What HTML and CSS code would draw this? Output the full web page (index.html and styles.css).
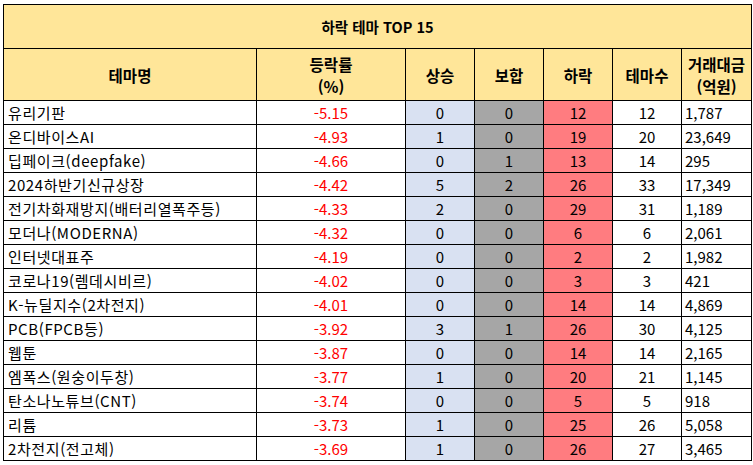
FILE: index.html
```html
<!DOCTYPE html>
<html lang="ko">
<head>
<meta charset="utf-8">
<title>하락 테마 TOP 15</title>
<link rel="stylesheet" href="styles.css">
</head>
<body>
<table class="grid">
  <colgroup>
    <col class="c-name"><col class="c-rate"><col class="c-n"><col class="c-n"><col class="c-n"><col class="c-n"><col class="c-amt">
  </colgroup>
  <thead>
    <tr class="title-row"><th colspan="7">하락 테마 TOP 15</th></tr>
    <tr class="head-row">
      <th>테마명</th><th>등락률<br>(%)</th><th>상승</th><th>보합</th><th>하락</th><th>테마수</th><th>거래대금<br>(억원)</th>
    </tr>
  </thead>
  <tbody>
    <tr><td class="name">유리기판</td><td class="rate">-5.15</td><td class="up">0</td><td class="flat">0</td><td class="down">12</td><td class="cnt">12</td><td class="amt">1,787</td></tr>
    <tr><td class="name">온디바이스AI</td><td class="rate">-4.93</td><td class="up">1</td><td class="flat">0</td><td class="down">19</td><td class="cnt">20</td><td class="amt">23,649</td></tr>
    <tr><td class="name">딥페이크(deepfake)</td><td class="rate">-4.66</td><td class="up">0</td><td class="flat">1</td><td class="down">13</td><td class="cnt">14</td><td class="amt">295</td></tr>
    <tr><td class="name">2024하반기신규상장</td><td class="rate">-4.42</td><td class="up">5</td><td class="flat">2</td><td class="down">26</td><td class="cnt">33</td><td class="amt">17,349</td></tr>
    <tr><td class="name">전기차화재방지(배터리열폭주등)</td><td class="rate">-4.33</td><td class="up">2</td><td class="flat">0</td><td class="down">29</td><td class="cnt">31</td><td class="amt">1,189</td></tr>
    <tr><td class="name">모더나(MODERNA)</td><td class="rate">-4.32</td><td class="up">0</td><td class="flat">0</td><td class="down">6</td><td class="cnt">6</td><td class="amt">2,061</td></tr>
    <tr><td class="name">인터넷대표주</td><td class="rate">-4.19</td><td class="up">0</td><td class="flat">0</td><td class="down">2</td><td class="cnt">2</td><td class="amt">1,982</td></tr>
    <tr><td class="name">코로나19(렘데시비르)</td><td class="rate">-4.02</td><td class="up">0</td><td class="flat">0</td><td class="down">3</td><td class="cnt">3</td><td class="amt">421</td></tr>
    <tr><td class="name">K-뉴딜지수(2차전지)</td><td class="rate">-4.01</td><td class="up">0</td><td class="flat">0</td><td class="down">14</td><td class="cnt">14</td><td class="amt">4,869</td></tr>
    <tr><td class="name">PCB(FPCB등)</td><td class="rate">-3.92</td><td class="up">3</td><td class="flat">1</td><td class="down">26</td><td class="cnt">30</td><td class="amt">4,125</td></tr>
    <tr><td class="name">웹툰</td><td class="rate">-3.87</td><td class="up">0</td><td class="flat">0</td><td class="down">14</td><td class="cnt">14</td><td class="amt">2,165</td></tr>
    <tr><td class="name">엠폭스(원숭이두창)</td><td class="rate">-3.77</td><td class="up">1</td><td class="flat">0</td><td class="down">20</td><td class="cnt">21</td><td class="amt">1,145</td></tr>
    <tr><td class="name">탄소나노튜브(CNT)</td><td class="rate">-3.74</td><td class="up">0</td><td class="flat">0</td><td class="down">5</td><td class="cnt">5</td><td class="amt">918</td></tr>
    <tr><td class="name">리튬</td><td class="rate">-3.73</td><td class="up">1</td><td class="flat">0</td><td class="down">25</td><td class="cnt">26</td><td class="amt">5,058</td></tr>
    <tr><td class="name">2차전지(전고체)</td><td class="rate">-3.69</td><td class="up">1</td><td class="flat">0</td><td class="down">26</td><td class="cnt">27</td><td class="amt">3,465</td></tr>
  </tbody>
</table>
</body>
</html>
```
FILE: styles.css
```css
html, body {
  margin: 0;
  background: #ffffff;
}
body {
  padding: 4px 0 0 3px;
  font-family: "Noto Sans CJK KR", "Noto Sans", sans-serif;
  font-size: 15px;
  color: #000000;
}
.grid {
  border-collapse: collapse;
  table-layout: fixed;
  width: 748px;
}
.c-name { width: 253px; }
.c-rate { width: 149px; }
.c-n { width: 69px; }
.c-amt { width: 70px; }
.grid th, .grid td {
  border: 1px solid #000000;
  padding: 0;
  overflow: hidden;
  white-space: nowrap;
}
.grid th {
  background: #ffe699;
  font-weight: bold;
  text-align: center;
}
.title-row th {
  height: 43px;
  line-height: 20px;
  font-size: 14.5px;
}
.head-row th {
  height: 51px;
  line-height: 22px;
  font-size: 15.5px;
}
.grid td {
  height: 23px;
  line-height: 20px;
  text-align: center;
}
.grid td.name {
  text-align: left;
  padding-left: 4px;
  letter-spacing: 0.6px;
}
.grid td.amt {
  text-align: left;
  padding-left: 3px;
}
.rate { color: #ff0000; }
.up { background: #d9e1f2; }
.flat { background: #a6a6a6; }
.down { background: #ff7c80; }
```
